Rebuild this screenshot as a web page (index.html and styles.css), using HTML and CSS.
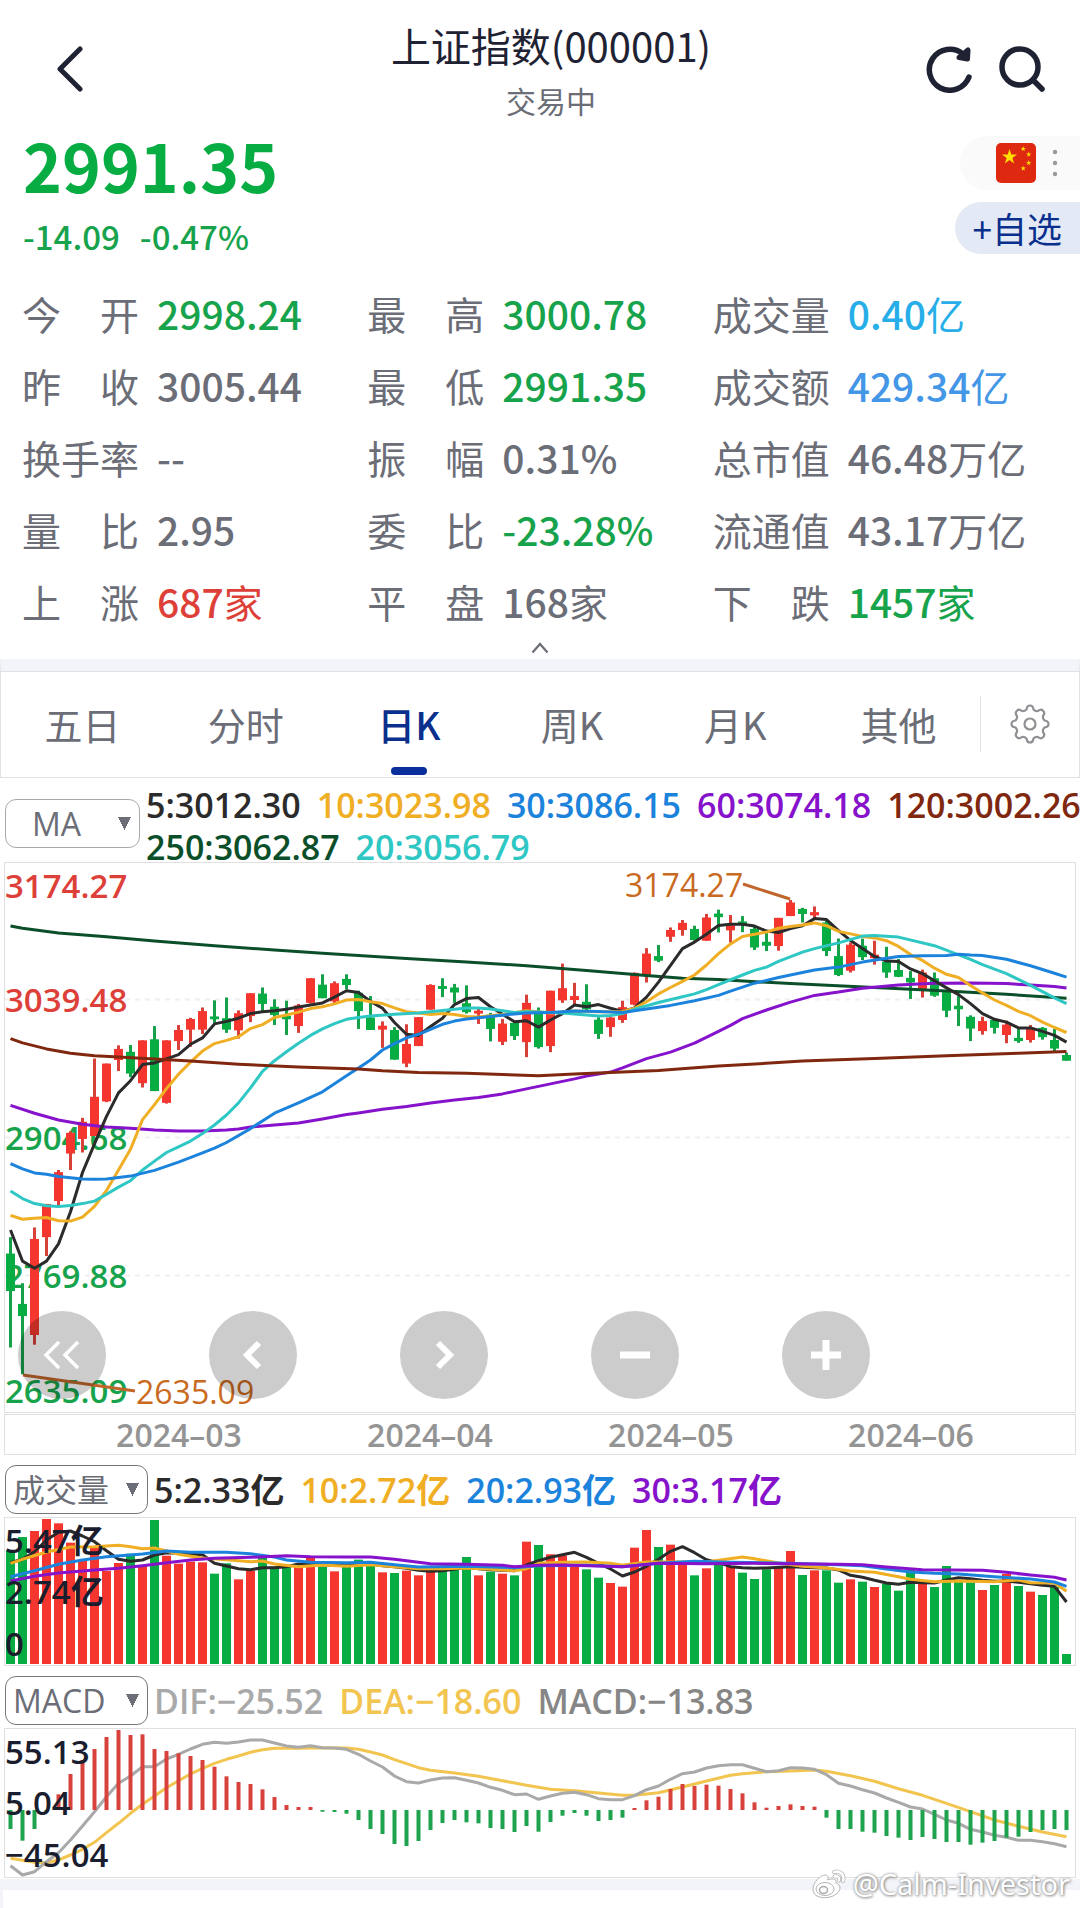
FILE: index.html
```html
<!DOCTYPE html>
<html lang="zh-CN">
<head>
    <meta charset="UTF-8">
    <meta name="viewport" content="width=device-width, initial-scale=1.0">
    <title>上证指数(000001)</title>
    <link rel="stylesheet" href="styles.css">
</head>
<body>
    <header class="topbar">
        <button class="icon-btn" type="button" aria-label="返回">
            <svg width="28" height="46" viewBox="0 0 28 46"><path d="M24 3 L4 23 L24 43" fill="none" stroke="#1f2233" stroke-width="5" stroke-linecap="round" stroke-linejoin="round"/></svg>
        </button>
        <div class="heading">
            <h1>上证指数(000001)</h1>
            <p>交易中</p>
        </div>
        <div class="actions">
            <button class="icon-btn" type="button" aria-label="刷新">
                <svg width="46" height="48" viewBox="0 0 46 48" fill="none" stroke="#1f2233" stroke-width="5.5" stroke-linecap="round" stroke-linejoin="round"><path d="M43 32 A20.500 20.500 0 1 1 37 9"/><path d="M42 5 L41.500 14 L33 12.500 Z" fill="#1f2233" stroke-width="5"/></svg>
            </button>
            <button class="icon-btn" type="button" aria-label="搜索">
                <svg width="48" height="48" viewBox="0 0 48 48" fill="none" stroke="#1f2233" stroke-width="5.5" stroke-linecap="round"><circle cx="22" cy="22" r="18"/><path d="M36 36 L44 44"/></svg>
            </button>
        </div>
    </header>

    <section class="price-row">
        <div>
            <div class="price">2991.35</div>
            <div class="change"><span>-14.09</span><span>-0.47%</span></div>
        </div>
        <div class="side">
            <button class="market" type="button" aria-label="市场">
                <svg width="40" height="40" viewBox="0 0 40 40">
                    <rect width="40" height="40" rx="5" fill="#de2910"/>
                    <g fill="#ffde00">
                        <path id="star" d="M13.5 6 L15.3 11.5 H21 L16.4 14.9 L18.1 20.5 L13.5 17.1 L8.9 20.5 L10.6 14.9 L6 11.5 H11.7 Z"/>
                        <use href="#star" transform="translate(22.5 1) scale(.35)"/>
                        <use href="#star" transform="translate(28 6.5) scale(.35)"/>
                        <use href="#star" transform="translate(28 15) scale(.35)"/>
                        <use href="#star" transform="translate(22.5 20.5) scale(.35)"/>
                    </g>
                </svg>
                <svg width="6" height="30" viewBox="0 0 6 30" fill="#999"><circle cx="3" cy="4" r="2.2"/><circle cx="3" cy="15" r="2.2"/><circle cx="3" cy="26" r="2.2"/></svg>
            </button>
            <button class="watch" type="button">+自选</button>
        </div>
    </section>

    <dl class="quotes">
        <div><dt>今 开</dt><dd class="down">2998.24</dd></div>
        <div><dt>最 高</dt><dd class="down">3000.78</dd></div>
        <div><dt>成交量</dt><dd class="cyan">0.40<span class="unit">亿</span></dd></div>
        <div><dt>昨 收</dt><dd>3005.44</dd></div>
        <div><dt>最 低</dt><dd class="down">2991.35</dd></div>
        <div><dt>成交额</dt><dd class="blue">429.34<span class="unit">亿</span></dd></div>
        <div><dt>换手率</dt><dd>--</dd></div>
        <div><dt>振 幅</dt><dd>0.31%</dd></div>
        <div><dt>总市值</dt><dd>46.48<span class="unit">万亿</span></dd></div>
        <div><dt>量 比</dt><dd>2.95</dd></div>
        <div><dt>委 比</dt><dd class="down">-23.28%</dd></div>
        <div><dt>流通值</dt><dd>43.17<span class="unit">万亿</span></dd></div>
        <div><dt>上 涨</dt><dd class="up">687<span class="unit">家</span></dd></div>
        <div><dt>平 盘</dt><dd>168<span class="unit">家</span></dd></div>
        <div><dt>下 跌</dt><dd class="down">1457<span class="unit">家</span></dd></div>
    </dl>
    <button class="collapse" type="button" aria-label="收起">
        <svg width="18" height="12" viewBox="0 0 18 12"><path d="M1.5 10.5 L9 2 L16.5 10.5" fill="none" stroke="#6b6d77" stroke-width="2.2"/></svg>
    </button>

    <nav class="tabs">
        <a href="#">五日</a>
        <a href="#">分时</a>
        <a href="#" class="active">日K</a>
        <a href="#">周K</a>
        <a href="#">月K</a>
        <a href="#">其他</a>
        <button class="settings" type="button" aria-label="设置">
            <svg width="40" height="40" viewBox="0 0 40 40" fill="none" stroke="#8f8f94" stroke-width="2.2" stroke-linejoin="round">
                <path d="M16.5 5.5 Q17 1.5 20 1.5 Q23 1.5 23.5 5.5 Q25.5 7.5 28 7 Q31 4.5 33 6.7 Q35.5 9 33 12 Q32.5 14.5 34.5 16.5 Q38.5 17 38.5 20 Q38.5 23 34.5 23.5 Q32.5 25.5 33 28 Q35.5 31 33 33.3 Q31 35.5 28 33 Q25.5 32.5 23.5 34.5 Q23 38.5 20 38.5 Q17 38.5 16.5 34.5 Q14.5 32.5 12 33 Q9 35.5 7 33.3 Q4.5 31 7 28 Q7.5 25.5 5.5 23.5 Q1.5 23 1.5 20 Q1.5 17 5.5 16.5 Q7.5 14.5 7 12 Q4.5 9 7 6.7 Q9 4.5 12 7 Q14.5 7.5 16.5 5.5 Z"/>
                <circle cx="20" cy="20" r="5.5"/>
            </svg>
        </button>
    </nav>

    <section class="toolbar toolbar-ma">
        <select class="picker picker-ma" aria-label="主图指标"><option>MA</option></select>
        <div class="legend">
            <div><span class="ma5">5:3012.30</span><span class="ma10">10:3023.98</span><span class="ma30">30:3086.15</span><span class="ma60">60:3074.18</span><span class="ma120">120:3002.26</span></div>
            <div><span class="ma250">250:3062.87</span><span class="ma20">20:3056.79</span></div>
        </div>
    </section>
    <section class="plot">
        <svg viewBox="0 0 1070 549" class="chart">
            <g class="grid">
                <path d="M0 136.5 H1065 M0 274.5 H1065 M0 412.5 H1065"/>
            </g>
            <g class="axis">
                <text x="0" y="35" class="up">3174.27</text>
                <text x="0" y="149" class="up">3039.48</text>
                <text x="0" y="287" class="down">2904.68</text>
                <text x="0" y="425" class="down">2769.88</text>
                <text x="0" y="540" class="down">2635.09</text>
            </g>
            <g id="kline"></g>
            <g class="mark">
                <path d="M738 21 L785 36 M18 512 L130 528"/>
                <text x="620" y="34">3174.27</text>
                <text x="131" y="541">2635.09</text>
            </g>
        </svg>
        <div class="controls">
            <button type="button" aria-label="最早"><svg width="40" height="32" viewBox="0 0 40 32"><path d="M17 3 L4 16 L17 29 M36 3 L23 16 L36 29" stroke-width="3.5"/></svg></button>
            <button type="button" aria-label="向左"><svg width="40" height="32" viewBox="0 0 40 32"><path d="M26 4 L14 16 L26 28" stroke-width="6"/></svg></button>
            <button type="button" aria-label="向右"><svg width="40" height="32" viewBox="0 0 40 32"><path d="M14 4 L26 16 L14 28" stroke-width="6"/></svg></button>
            <button type="button" aria-label="缩小"><svg width="40" height="32" viewBox="0 0 40 32"><path d="M5 16 H35" stroke-width="7"/></svg></button>
            <button type="button" aria-label="放大"><svg width="40" height="32" viewBox="0 0 40 32"><path d="M5 16 H35 M20 1 V31" stroke-width="7"/></svg></button>
        </div>
    </section>
    <section class="plot">
        <svg viewBox="0 0 1070 39" class="chart dates">
            <text x="174" y="32">2024–03</text>
            <text x="425" y="32">2024–04</text>
            <text x="666" y="32">2024–05</text>
            <text x="906" y="32">2024–06</text>
        </svg>
    </section>

    <section class="toolbar">
        <select class="picker" aria-label="副图一"><option>成交量</option></select>
        <div class="legend">
            <div><span class="ma5">5:2.33亿</span><span class="ma10">10:2.72亿</span><span class="ma30">20:2.93亿</span><span class="ma60">30:3.17亿</span></div>
        </div>
    </section>
    <section class="plot">
        <svg viewBox="0 0 1070 147" class="chart">
            <g id="volume"></g>
            <g class="axis dark">
                <text x="0" y="35">5.47亿</text>
                <text x="0" y="86">2.74亿</text>
                <text x="0" y="138">0</text>
            </g>
        </svg>
    </section>

    <section class="toolbar">
        <select class="picker" aria-label="副图二"><option>MACD</option></select>
        <div class="legend">
            <div><span class="dif">DIF:−25.52</span><span class="dea">DEA:−18.60</span><span class="macd">MACD:−13.83</span></div>
        </div>
    </section>
    <section class="plot">
        <svg viewBox="0 0 1070 148" class="chart">
            <g id="macd"></g>
            <g class="axis dark">
                <text x="0" y="35">55.13</text>
                <text x="0" y="86">5.04</text>
                <text x="0" y="138">−45.04</text>
            </g>
        </svg>
    </section>

    <footer class="bottom">
        <div class="watermark">
            <svg width="36" height="32" viewBox="0 0 36 32" fill="none">
                <path d="M2 21 C2 14 10 7 14 7 C18 7 17 11 16.5 12 C20 10.5 26 10 25 15 C30 17 30 21 27 24.5 C22 30 12 31 6 28 C3 26.5 2 24 2 21 Z" fill="#fff" stroke="#b5b5b5"/>
                <ellipse cx="14" cy="21" rx="9" ry="6.5" stroke="#b5b5b5"/>
                <ellipse cx="12.5" cy="22" rx="4" ry="3.5" stroke="#aaa" stroke-width="1.5"/>
                <path d="M23 4 C29 2 34 7 32 13 M23.5 8.5 C27 7.5 29 10 28 12.5" stroke="#b5b5b5" stroke-width="4" stroke-linecap="round"/>
                <path d="M23 4 C29 2 34 7 32 13 M23.5 8.5 C27 7.5 29 10 28 12.5" stroke="#fff" stroke-width="2.5" stroke-linecap="round"/>
            </svg>
            <span>@Calm-Investor</span>
        </div>
    </footer>

    <script src="chart.js"></script>
</body>
</html>
```
FILE: styles.css
```css
* {
    box-sizing: border-box;
}
body {
    margin: 0;
    background: #fff;
    color: #6b6d77;
    font-family: "Noto Sans CJK SC", sans-serif;
    overflow-x: hidden;
}
button {
    padding: 0;
    border: none;
    background: none;
    font-family: inherit;
    cursor: pointer;
}
svg {
    display: block;
}
.up {
    color: #dd4038;
    fill: #dd4038;
}
.down {
    color: #17a34c;
    fill: #17a34c;
}
.cyan {
    color: #27aee8;
}
.blue {
    color: #4496e6;
}

/* header */
.topbar {
    display: grid;
    grid-template-columns: 1fr auto 1fr;
    align-items: center;
    padding: 16px 34px 0 56px;
}
.topbar > .icon-btn {
    justify-self: start;
    margin-bottom: 4px;
}
.heading {
    text-align: center;
}
.heading h1 {
    margin: 0;
    color: #1f2233;
    font-size: 40px;
    font-weight: 400;
    line-height: 58px;
}
.heading p {
    margin: 0;
    font-size: 30px;
    line-height: 52px;
}
.actions {
    display: flex;
    justify-content: flex-end;
    gap: 26px;
    margin-bottom: 4px;
}

/* price */
.price-row {
    display: flex;
    justify-content: space-between;
    padding-left: 23px;
}
.price {
    color: #07ad43;
    font-size: 66px;
    font-weight: 700;
    line-height: 76px;
}
.change {
    display: flex;
    gap: 20px;
    color: #17a34c;
    font-size: 33px;
    font-weight: 500;
    line-height: 68px;
}
.side {
    display: flex;
    flex-direction: column;
    align-items: flex-end;
    gap: 12px;
    padding-top: 10px;
}
.market {
    display: flex;
    align-items: center;
    gap: 16px;
    height: 54px;
    padding: 0 22px 0 36px;
    border-radius: 27px 0 0 27px;
    background: #fafafa;
}
.watch {
    height: 52px;
    padding: 0 18px;
    border-radius: 26px 0 0 26px;
    background: #e4eaf5;
    color: #0a2f8c;
    font-size: 35px;
    line-height: 52px;
}

/* quote table */
.quotes {
    display: grid;
    grid-template-columns: repeat(3, 1fr);
    margin: 7px 0 0;
    padding: 0 22px;
}
.quotes div {
    display: flex;
    gap: 18px;
    font-size: 39px;
    line-height: 72px;
    white-space: nowrap;
}
.quotes dt {
    width: 3em;
    text-align-last: justify;
}
.quotes dd {
    margin: 0;
    font-weight: 500;
}
.quotes .unit {
    font-weight: 400;
}
.collapse {
    display: flex;
    align-items: center;
    justify-content: center;
    width: 100%;
    height: 22px;
}

/* tabs */
.tabs {
    display: grid;
    grid-template-columns: repeat(6, 1fr) 99px;
    align-items: center;
    height: 119px;
    border: 1px solid #e2e2e2;
    border-top: 12px solid #f3f4f9;
    box-shadow: inset 0 1px #e2e2e2;
}
.tabs a {
    position: relative;
    color: #6b6d77;
    font-size: 38px;
    line-height: 106px;
    text-align: center;
    text-decoration: none;
}
.tabs .active {
    color: #0a2f8c;
    font-weight: 500;
}
.tabs .active::after {
    content: "";
    position: absolute;
    bottom: 2px;
    left: 50%;
    width: 36px;
    height: 8px;
    margin-left: -18px;
    border-radius: 4px;
    background: #0a2f9c;
}
.settings {
    display: flex;
    align-items: center;
    justify-content: center;
    height: 56px;
    border-left: 1px solid #e2e2e2;
}

/* indicator bars */
.toolbar {
    display: flex;
    align-items: center;
    gap: 6px;
    height: 61px;
    padding: 6px 0 0 5px;
}
.toolbar-ma {
    height: 84px;
}
.toolbar-ma .legend {
    margin-top: 6px;
}
.picker {
    flex: none;
    width: 143px;
    height: 49px;
    padding: 0 7px;
    border: 1px solid #777;
    border-radius: 11px;
    background: conic-gradient(from -26deg at 50% 100%, #6b6d77 52deg, transparent 0) right 8px center / 13px 13px no-repeat;
    color: #6b6d77;
    font-family: "Open Sans", "Noto Sans CJK SC", sans-serif;
    font-size: 32px;
    appearance: none;
}
.picker-ma {
    width: 135px;
    padding-left: 26px;
    border-color: #aaa;
}
.legend {
    font-family: "Open Sans", "Noto Sans CJK SC", sans-serif;
    font-size: 34px;
    font-weight: 600;
    line-height: 42px;
    white-space: nowrap;
}
.legend div {
    display: flex;
    gap: 16px;
}
.ma5 { color: #2b2b2b; }
.ma10 { color: #efae23; }
.ma20 { color: #2fc7c4; }
.ma30 { color: #1c83dc; }
.ma60 { color: #8612cb; }
.ma120 { color: #80280f; }
.ma250 { color: #0b4f2a; }
.dif { color: #a9a9a9; }
.dea { color: #f2c450; }
.macd { color: #868686; }

/* charts */
.plot {
    position: relative;
    margin: 0 4px 1px;
    border: 1px solid #e0e0e0;
}
.chart {
    width: 100%;
    height: auto;
    overflow: visible;
    font-family: "Open Sans", "Noto Sans CJK SC", sans-serif;
    font-size: 33px;
}
.axis {
    font-weight: 600;
}
.dark {
    fill: #1a1d2e;
}
.grid {
    stroke: #f0f0f0;
    stroke-width: 2;
    stroke-dasharray: 5 5;
}
.mark {
    fill: #c96a20;
    font-size: 32px;
}
.mark path {
    fill: none;
    stroke: #c0662a;
    stroke-width: 3;
}
.dates {
    fill: #949494;
    font-size: 32px;
    font-weight: 600;
    text-anchor: middle;
}
.line {
    fill: none;
    stroke: currentColor;
    stroke-width: 3;
    stroke-linejoin: round;
}
.controls {
    position: absolute;
    left: 13px;
    bottom: 13px;
    display: flex;
    gap: 103px;
}
.controls button {
    display: flex;
    align-items: center;
    justify-content: center;
    width: 88px;
    height: 88px;
    border-radius: 50%;
    background: rgba(0, 0, 0, .2);
}
.controls path {
    fill: none;
    stroke: #fff;
}

/* bottom */
.bottom {
    position: relative;
    height: 30px;
    border-top: 11px solid #f3f4f9;
    border-left: 3px solid #f3f4f9;
}
.watermark {
    position: absolute;
    right: 10px;
    bottom: 5px;
    display: flex;
    align-items: center;
    gap: 6px;
    color: #fff;
    font-family: "Noto Sans", sans-serif;
    font-size: 29px;
    line-height: 40px;
    text-shadow: 0 0 3px #888, 1px 1px 3px #999;
}
```
FILE: chart.js
```js
const STEP = 12;
const LEFT = 5.5;
const UP = "#f4362f";
const DOWN = "#07ad43";

// [dir, high, body top, body bottom, low]
const candles = [
    ["g",1056,1102,1207,1365],["g",1185,1243,1277,1440],["r",1029,1061,1330,1357],["r",963,963,1056,1109],
    ["r",868,874,955,967],["r",760,764,822,868],["r",722,733,781,819],["r",556,663,773,773],
    ["r",570,570,676,678],["r",519,529,560,591],["g",518,537,598,608],["r",505,505,625,637],
    ["g",465,502,647,647],["r",505,505,680,682],["r",462,476,507,532],["r",442,445,475,523],
    ["r",413,423,475,487],["g",393,438,446,456],["g",385,443,475,484],["r",421,429,477,500],
    ["r",373,373,437,454],["g",357,374,403,423],["g",390,411,434,462],["g",394,437,446,490],
    ["r",403,407,465,484],["r",331,331,400,402],["g",320,349,387,387],["r",340,345,396,402],
    ["g",320,333,350,362],["g",366,372,423,473],["g",381,441,476,476],["r",452,464,475,526],
    ["g",468,476,559,559],["r",460,515,570,580],["r",440,440,521,521],["r",348,350,419,419],
    ["g",331,353,361,384],["g",347,357,371,400],["g",351,401,426,430],["r",417,422,430,459],
    ["g",428,433,473,508],["r",445,458,509,518],["g",450,456,493,504],["r",377,400,510,552],
    ["g",413,430,524,528],["r",366,366,521,538],["r",290,359,393,400],["r",344,381,392,408],
    ["g",348,397,418,420],["g",440,447,487,501],["r",440,441,468,495],["r",394,412,448,456],
    ["r",315,316,405,407],["r",247,262,324,343],["g",238,269,282,286],["r",189,196,215,229],
    ["r",168,176,196,212],["g",184,193,224,226],["r",151,161,226,226],["g",139,150,160,203],
    ["r",154,183,197,231],["g",157,172,179,202],["g",185,193,245,252],["g",203,229,240,255],
    ["r",162,162,241,254],["r",112,119,157,157],["g",134,137,151,175],["r",130,146,155,165],
    ["g",170,175,255,269],["g",220,269,322,325],["r",231,237,310,315],["g",220,240,272,280],
    ["r",226,265,275,293],["g",243,285,315,330],["g",277,308,327,328],["g",311,330,343,389],
    ["r",307,315,361,385],["g",315,331,380,383],["g",368,370,422,440],["g",381,408,418,465],
    ["g",435,439,472,507],["r",439,451,479,489],["g",444,448,470,486],["r",450,461,490,513],
    ["g",473,498,507,512],["r",462,470,504,511],["g",468,470,496,503],["g",473,504,528,537],
    ["g",539,546,562,562]
];

const volumes = [
    450,411,393,357,370,428,480,440,513,489,461,495,360,467,491,485,487,521,490,538,512,473,500,498,500,472,
    500,514,500,479,495,517,519,512,526,510,510,505,471,526,515,521,526,425,435,463,467,497,508,533,549,560,
    443,390,441,434,490,526,505,493,500,518,537,508,500,453,525,511,511,548,538,545,561,552,572,508,548,561,
    498,545,547,570,555,522,558,575,585,560,762
];

const macd = [
    507,542,507,451,403,342,300,267,231,210,225,223,267,273,280,288,300,320,349,366,372,388,411,435,441,441,
    455,456,461,480,507,522,552,558,543,510,489,480,487,490,504,507,516,498,515,486,467,459,467,483,480,473,
    444,421,410,387,372,378,374,377,387,400,427,443,438,433,438,440,473,507,507,515,518,528,533,540,531,537,
    546,546,554,548,543,533,530,516,510,507,510
];

// lines: flat lists of bar index, level
const klines = {
    ma250: [0,185,1,191,4,204,8,215,12,227,17,240,22,252,26,261,29,267,33,276,38,286,43,296,48,309,53,323,56,331,59,335,65,346,72,357,78,367,83,376,88,387],
    ma60: [0,687,2,709,4,728,6,740,8,748,10,751,12,756,14,759,16,759,18,756,19,753,20,748,22,742,24,736,26,725,28,713,29,708,31,698,33,690,35,680,37,672,39,665,41,655,43,641,45,627,47,613,48,605,50,594,51,582,53,556,55,538,57,513,59,480,60,463,61,444,63,420,65,398,67,379,69,370,71,359,74,350,77,345,80,344,83,346,85,350,87,354,88,358],
    ma5: [0,1036,1,1123,2,1143,3,1123,4,1075,5,985,6,875,7,795,8,718,9,652,10,618,11,573,12,568,13,557,14,545,15,516,16,498,17,459,18,452,19,443,20,430,21,425,22,422,23,418,24,412,25,406,26,400,27,384,28,366,29,371,30,396,31,415,32,455,33,488,34,491,35,466,36,443,37,405,38,388,39,385,40,411,41,432,42,453,43,450,44,468,45,448,46,430,47,406,48,411,49,405,50,415,51,424,52,414,53,384,54,342,55,295,56,248,57,230,58,208,59,183,60,180,61,180,62,185,63,199,64,203,65,192,66,184,67,164,68,167,69,198,70,225,71,248,72,270,73,283,74,284,75,305,76,318,77,338,78,358,79,377,80,402,81,430,82,446,83,454,84,470,85,470,86,480,87,491,88,510],
    ma10: [0,995,1,1006,2,1003,3,1001,4,1010,5,1011,6,1000,7,970,8,925,9,868,10,810,11,727,12,685,13,640,14,600,15,566,16,535,17,514,18,505,19,495,20,472,21,461,22,441,23,434,24,426,25,416,26,411,27,403,28,392,29,391,30,397,31,402,32,414,33,425,34,428,35,433,36,430,37,433,38,438,39,440,40,436,41,433,43,422,45,428,47,423,49,425,51,424,52,415,53,397,54,375,55,357,56,340,57,322,58,294,59,262,60,235,61,214,62,208,63,202,64,191,65,186,66,182,67,176,68,184,69,200,70,207,71,214,72,218,73,226,74,242,75,265,76,281,77,303,78,320,79,329,80,351,81,372,82,392,83,407,84,424,85,436,86,454,87,469,88,483],
    ma20: [0,927,1,948,2,962,3,968,4,970,5,967,6,962,7,955,8,936,9,916,10,898,11,868,12,843,13,819,14,803,15,787,16,766,17,742,18,714,19,680,20,638,21,592,22,562,23,537,24,513,25,491,26,473,27,458,28,446,29,441,30,437,32,432,34,428,36,421,38,414,39,414,40,417,42,427,43,425,44,426,46,428,48,434,49,437,50,435,51,430,52,418,54,399,56,383,57,375,58,363,59,349,61,322,62,309,63,300,64,284,66,258,67,248,69,232,71,213,72,211,74,216,77,240,80,278,81,293,83,318,85,351,87,386,88,402],
    ma30: [0,850,1,865,2,876,3,880,4,886,6,893,7,894,8,893,10,885,12,869,14,846,16,820,17,807,18,791,20,752,22,709,24,680,26,649,28,604,29,582,30,560,31,532,32,514,33,498,34,488,36,460,37,451,38,445,40,438,42,431,43,428,45,427,47,423,49,424,51,427,53,417,55,407,57,394,59,379,60,367,62,345,64,329,67,308,69,300,71,286,73,275,74,270,76,268,78,267,79,264,80,266,81,267,83,278,85,296,87,317,88,328],
    ma120: [0,500,1,512,3,529,5,541,7,548,9,552,12,557,15,563,19,572,24,580,29,585,31,590,34,595,38,597,41,601,44,604,47,599,50,595,54,589,59,577,66,563,72,556,78,548,84,541,88,536]
};

const volumeLines = {
    ma5: [0,488,1,478,2,455,3,420,4,397,5,393,6,408,7,425,8,452,9,478,10,484,11,480,12,465,13,458,14,460,15,462,16,464,17,490,18,498,19,506,20,509,21,503,22,503,23,500,24,492,26,494,28,497,30,492,31,497,32,500,33,505,34,511,35,514,36,512,37,508,38,502,39,506,40,509,41,511,42,512,43,495,44,482,45,472,46,464,47,457,48,472,49,490,50,507,51,528,52,516,53,499,54,478,55,454,56,440,57,458,58,479,59,488,60,500,61,503,62,505,63,504,65,500,67,503,68,504,69,510,70,526,71,532,72,541,73,549,74,553,75,547,76,548,77,549,78,540,79,533,80,536,81,541,82,544,83,543,84,547,85,551,86,556,87,559,88,606],
    ma10: [0,490,1,478,3,456,5,441,7,440,9,436,10,440,11,446,12,444,13,453,14,463,16,474,18,479,20,485,21,483,22,492,24,500,26,495,28,499,30,494,32,500,34,506,36,506,38,504,40,508,42,512,43,506,44,490,46,487,48,486,50,490,51,496,53,486,56,486,58,485,59,481,61,471,62,476,64,489,66,499,68,504,70,513,72,517,74,530,75,538,77,545,79,543,82,545,84,540,85,548,87,549,88,574],
    ma30: [0,530,2,512,4,493,6,480,8,470,10,465,11,462,13,453,15,457,18,457,20,461,22,471,23,480,25,487,28,488,30,487,32,494,34,501,38,499,42,503,44,497,48,496,51,500,54,490,57,484,60,487,64,489,69,494,71,497,73,507,75,516,77,520,79,522,82,530,85,537,87,546,88,559],
    ma60: [0,543,2,529,4,519,7,510,9,505,11,497,13,488,15,480,17,475,20,472,23,467,25,470,28,471,30,471,32,478,35,491,38,493,41,496,42,500,44,496,46,495,51,500,54,490,58,491,62,490,69,493,71,494,73,501,76,509,81,511,83,517,85,525,87,532,88,540]
};

const macdLines = {
    dea: [0,595,1,601,2,607,3,608,4,600,5,585,6,568,7,547,8,518,9,490,10,460,11,433,12,408,13,383,14,362,15,342,16,325,17,310,18,298,19,288,20,277,21,269,22,265,24,265,26,263,28,264,29,268,30,276,31,285,32,299,33,311,34,323,35,331,37,339,39,349,41,362,43,376,45,388,47,392,49,399,51,406,52,406,54,398,56,381,58,363,60,346,61,341,63,335,65,333,67,330,68,334,70,347,72,364,74,386,76,406,78,430,80,455,82,480,84,499,86,516,88,530],
    dif: [0,617,1,645,2,635,3,605,4,578,5,540,6,498,7,455,8,410,9,370,10,348,11,320,12,320,13,297,14,283,15,267,16,253,17,247,18,250,19,246,20,240,21,240,22,249,23,258,24,262,25,257,26,263,27,264,28,268,29,283,30,303,31,321,32,348,33,365,34,369,35,360,36,354,37,353,38,361,39,369,40,382,41,391,42,404,43,402,44,418,45,408,46,400,47,397,48,404,49,416,50,419,51,419,52,407,53,389,54,378,55,358,56,341,57,336,58,324,59,317,60,314,61,314,62,325,63,335,64,332,65,323,66,324,67,328,68,344,69,370,70,378,71,389,72,399,73,414,74,427,75,441,76,447,77,463,78,480,79,490,80,508,81,516,82,526,83,532,84,541,85,541,86,545,87,551,88,560]
};

const x = i => LEFT + i * STEP;

function rect(cx, w, top, bottom, color) {
    return `<rect x="${cx - w / 2}" y="${top}" width="${w}" height="${Math.max(bottom - top, 1)}" fill="${color}"/>`;
}

function lines(set, y) {
    return Object.keys(set).map(name => {
        const pts = [];
        for (let i = 0; i < set[name].length; i += 2) {
            pts.push(`${x(set[name][i])},${y(set[name][i + 1]).toFixed(1)}`);
        }
        return `<polyline class="line ${name}" points="${pts.join(" ")}"/>`;
    }).join("");
}

function drawKline() {
    const y = v => v / 2.8 - 3;
    const bars = candles.map(([dir, high, top, bottom, low], i) => {
        const color = dir === "r" ? UP : DOWN;
        const wick = dir === "r" ? "#d8403a" : "#17a04a";
        return rect(x(i), 3, y(high), y(low), wick) + rect(x(i), 9, y(top), y(bottom), color);
    });
    document.getElementById("kline").innerHTML = bars.join("") + lines(klines, y);
}

function drawVolume() {
    const y = v => v / 3 - 118;
    const bars = volumes.map((v, i) => rect(x(i), 9, y(v), 146, candles[i][0] === "r" ? UP : DOWN));
    document.getElementById("volume").innerHTML = bars.join("") + lines(volumeLines, y);
}

function drawMacd() {
    const y = v => v / 3 - 69;
    const zero = y(450);
    const bars = macd.map((v, i) => v < 450
        ? rect(x(i), 4, y(v), zero, "#d8423c")
        : rect(x(i), 4, zero, y(v), "#1fa24e"));
    document.getElementById("macd").innerHTML = lines(macdLines, y) + bars.join("");
}

drawKline();
drawVolume();
drawMacd();
```
